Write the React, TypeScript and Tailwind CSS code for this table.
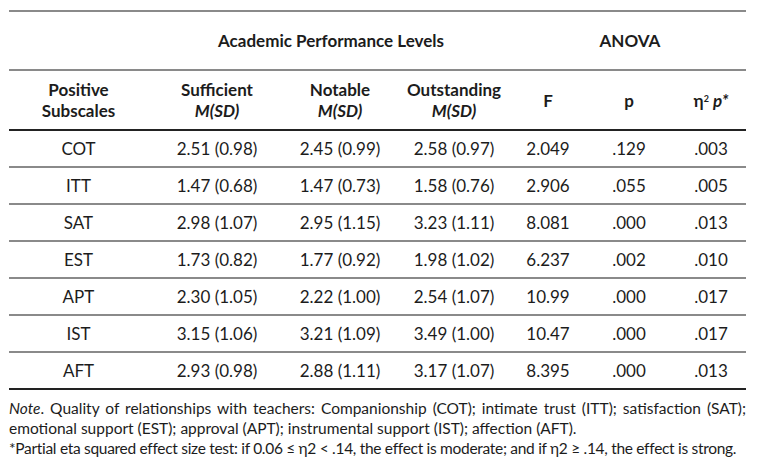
const rows = [
  ["COT", "2.51 (0.98)", "2.45 (0.99)", "2.58 (0.97)", "2.049", ".129", ".003"],
  ["ITT", "1.47 (0.68)", "1.47 (0.73)", "1.58 (0.76)", "2.906", ".055", ".005"],
  ["SAT", "2.98 (1.07)", "2.95 (1.15)", "3.23 (1.11)", "8.081", ".000", ".013"],
  ["EST", "1.73 (0.82)", "1.77 (0.92)", "1.98 (1.02)", "6.237", ".002", ".010"],
  ["APT", "2.30 (1.05)", "2.22 (1.00)", "2.54 (1.07)", "10.99", ".000", ".017"],
  ["IST", "3.15 (1.06)", "3.21 (1.09)", "3.49 (1.00)", "10.47", ".000", ".017"],
  ["AFT", "2.93 (0.98)", "2.88 (1.11)", "3.17 (1.07)", "8.395", ".000", ".013"],
]

const cols = "grid grid-cols-[139px_138px_108px_120px_68px_94px_70px]"

export default function App() {
  return (
    <div className="w-[762px] h-[466px] bg-white pt-[10px] px-[9px] font-['Lato',sans-serif] text-[#1c1c1c]">
      <div className="w-[737px] border-t-2 border-[#8a8a8a] text-[17px]">
        {/* group header */}
        <div className={`${cols} h-[59px] items-center border-b-2 border-[#8a8a8a] font-bold`}>
          <div />
          <div className="col-span-3 text-center">Academic Performance Levels</div>
          <div className="col-span-3 text-center">ANOVA</div>
        </div>

        {/* column header */}
        <div className={`${cols} h-[60px] items-center border-b-2 border-[#222] font-bold text-center leading-[21px]`}>
          <div>
            Positive
            <br />
            Subscales
          </div>
          <div>
            Sufficient
            <br />
            <i>M(SD)</i>
          </div>
          <div>
            Notable
            <br />
            <i>M(SD)</i>
          </div>
          <div>
            Outstanding
            <br />
            <i>M(SD)</i>
          </div>
          <div>F</div>
          <div>p</div>
          <div>
            η<sup className="text-[9px]">2</sup> <i>p*</i>
          </div>
        </div>

        {rows.map((r, i) => (
          <div
            key={r[0]}
            className={`${cols} h-[37px] items-center text-center border-b-2 ${
              i === rows.length - 1 ? "border-[#222]" : "border-[#8a8a8a]"
            }`}
          >
            {r.map((c, j) => (
              <div key={j}>{c}</div>
            ))}
          </div>
        ))}
      </div>

      <div className="w-[737px] mt-[8px] text-[15.5px] leading-[20px]">
        <p className="text-justify [text-align-last:justify] whitespace-nowrap">
          <i>Note</i>. Quality of relationships with teachers: Companionship (COT); intimate trust (ITT); satisfaction (SAT);
        </p>
        <p>emotional support (EST); approval (APT); instrumental support (IST); affection (AFT).</p>
        <p className="whitespace-nowrap tracking-[-0.3px]">
          *Partial eta squared effect size test: if 0.06 ≤ η2 &lt; .14, the effect is moderate; and if η2 ≥ .14, the effect is strong.
        </p>
      </div>
    </div>
  )
}
